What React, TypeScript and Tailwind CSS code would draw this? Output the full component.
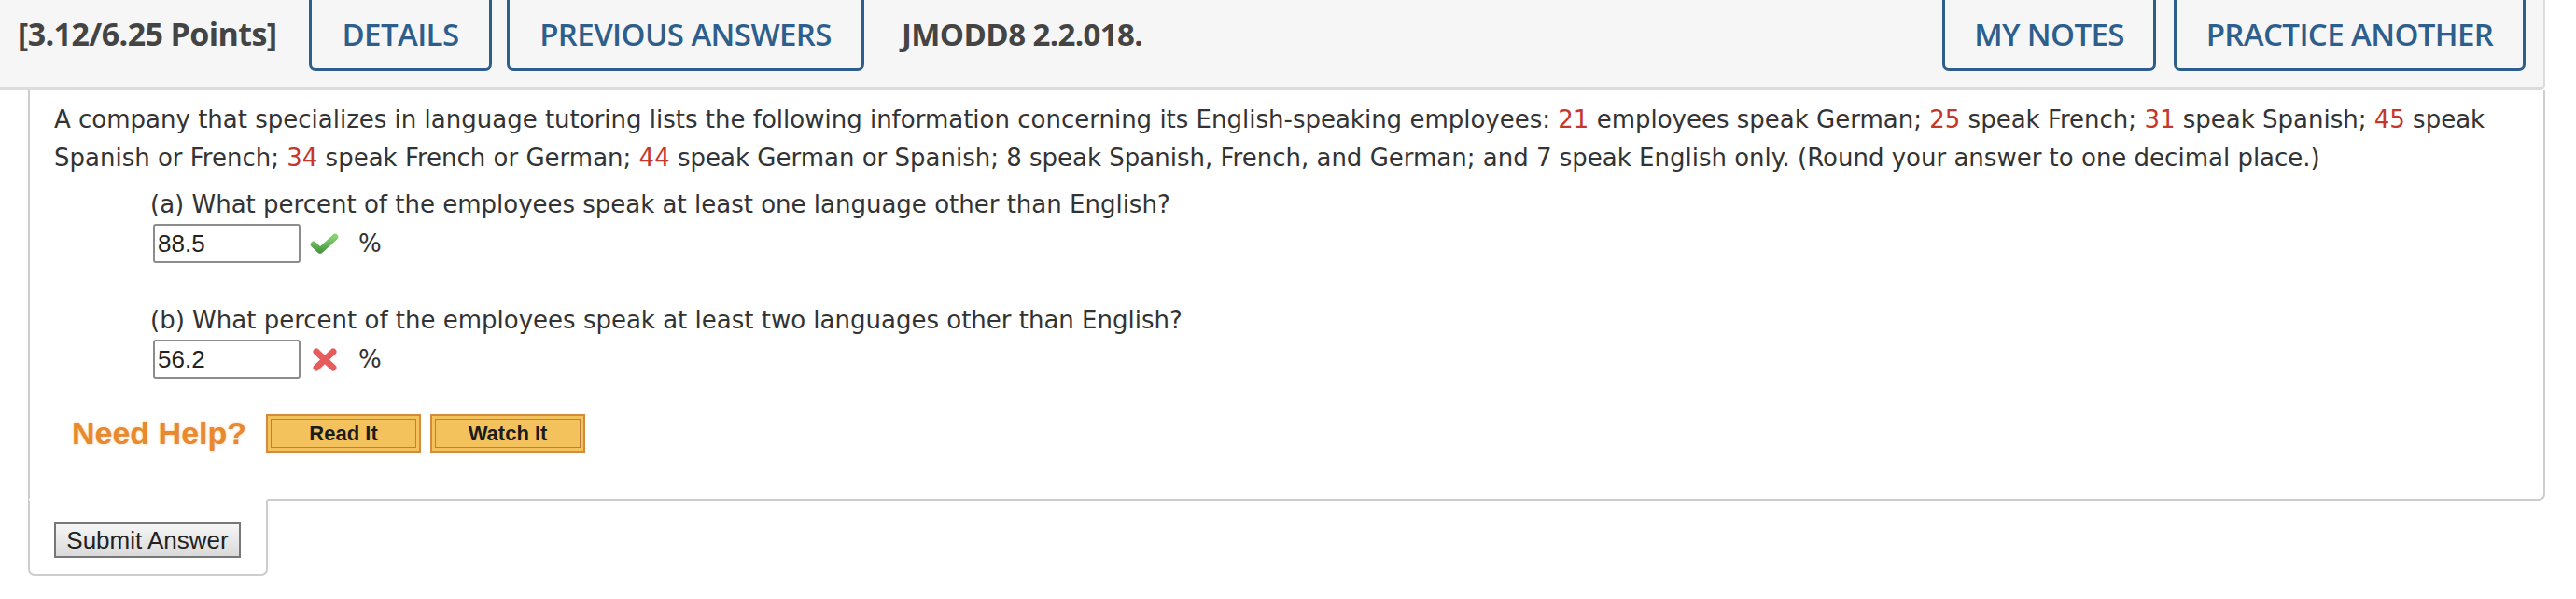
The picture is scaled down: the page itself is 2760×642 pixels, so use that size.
import React from 'react';

// Numbers shown in red inside the question text
const Num = ({ children }: { children: React.ReactNode }) => (
  <span className="text-[#c4372c]">{children}</span>
);

const HeaderButton = ({ label, width }: { label: string; width: string }) => (
  <button
    className={`${width} h-[76px] flex items-center justify-center border-[3px] border-t-0 border-[#2e5f8c] rounded-b-[7px] text-[#2e5f8c] font-semibold tracking-[-0.6px]`}
  >
    {label}
  </button>
);

const CheckIcon = () => (
  <svg width="31" height="22" viewBox="0 0 31 22" className="shrink-0">
    <defs>
      <linearGradient id="chk" x1="0" y1="0" x2="0" y2="1">
        <stop offset="0" stopColor="#86d272" />
        <stop offset="1" stopColor="#4c9a43" />
      </linearGradient>
    </defs>
    <path
      d="M4 12 L11 18.5 L27 4"
      fill="none"
      stroke="url(#chk)"
      strokeWidth="6.5"
      strokeLinecap="round"
      strokeLinejoin="round"
    />
  </svg>
);

const CrossIcon = () => (
  <svg width="28" height="25" viewBox="0 0 28 25" className="shrink-0">
    <path
      d="M5 4 L23 21 M23 4 L5 21"
      fill="none"
      stroke="#e65b5c"
      strokeWidth="7"
      strokeLinecap="round"
    />
  </svg>
);

const AnswerRow = ({ value, correct }: { value: string; correct: boolean }) => (
  <div className="flex items-center h-[42px] ml-[106px]">
    <input
      readOnly
      value={value}
      className="w-[158px] h-[42px] border-2 border-[#8c8c8c] rounded-[3px] px-[3px] bg-white text-[26px] text-[#222] font-['Liberation_Sans',Arial,sans-serif] outline-none"
    />
    <span className="ml-[10px] w-[31px] flex justify-center">
      {correct ? <CheckIcon /> : <CrossIcon />}
    </span>
    <span className="ml-[21px]">%</span>
  </div>
);

const HelpButton = ({ label }: { label: string }) => (
  <button className="w-[166px] h-[41px] p-[3px] bg-[#f4c25c] border-2 border-[#d58a3c]">
    <span className="w-full h-full flex items-center justify-center border border-[#b9803f] text-[22px] font-bold text-[#1c1c1c] font-['Liberation_Sans',Arial,sans-serif]">
      {label}
    </span>
  </button>
);

export default function App() {
  return (
    <div className="w-[2760px] h-[642px] overflow-hidden bg-white text-[#333] font-['DejaVu_Sans',Verdana,sans-serif]">
      {/* Top bar */}
      <header className="w-[2727px] h-[96px] bg-[#f6f6f6] border-b-[3px] border-r-2 border-[#dcdcdc] rounded-br-[5px] flex items-start font-['Open_Sans',sans-serif] text-[33px]">
        <div className="w-[314px] h-[73px] pl-[19px] flex items-center font-bold text-[34px] text-[#444] tracking-[-0.6px] whitespace-nowrap">
          [3.12/6.25 Points]
        </div>
        <div className="ml-[17px] flex gap-[16px]">
          <HeaderButton label="DETAILS" width="w-[196px]" />
          <HeaderButton label="PREVIOUS ANSWERS" width="w-[383px]" />
        </div>
        <div className="h-[73px] ml-[40px] flex items-center font-bold text-[#444] tracking-[-0.6px]">
          JMODD8 2.2.018.
        </div>
        <div className="ml-auto mr-[19px] flex gap-[19px]">
          <HeaderButton label="MY NOTES" width="w-[229px]" />
          <HeaderButton label="PRACTICE ANOTHER" width="w-[377px]" />
        </div>
      </header>

      {/* Question box */}
      <div className="ml-[30px] w-[2697px]">
        <div className="border-l-2 border-r-2 border-b-2 border-[#cdcdcd] rounded-br-[7px] pl-[26px] pr-[8px] pt-[12px] pb-[50px] text-[26px] leading-[41px]">
          <p>
            A company that specializes in language tutoring lists the following information concerning its
            English-speaking employees: <Num>21</Num> employees speak German; <Num>25</Num> speak French;{' '}
            <Num>31</Num> speak Spanish; <Num>45</Num> speak Spanish or French; <Num>34</Num> speak French or
            German; <Num>44</Num> speak German or Spanish; 8 speak Spanish, French, and German; and 7 speak English
            only. (Round your answer to one decimal place.)
          </p>

          <div className="mt-[9px] ml-[103px]">(a) What percent of the employees speak at least one language other than English?</div>
          <AnswerRow value="88.5" correct />

          <div className="mt-[41px] ml-[103px]">(b) What percent of the employees speak at least two languages other than English?</div>
          <AnswerRow value="56.2" correct={false} />

          <div className="mt-[38px] ml-[19px] flex items-center gap-[21px]">
            <span className="text-[34px] leading-[41px] font-bold text-[#e8892f] font-['Liberation_Sans',Arial,sans-serif] [text-shadow:0_0_3px_#f6cf9f]">
              Need Help?
            </span>
            <div className="flex gap-[10px]">
              <HelpButton label="Read It" />
              <HelpButton label="Watch It" />
            </div>
          </div>
        </div>

        {/* Submit tab */}
        <div className="relative -mt-[2px] w-[257px] h-[82px] bg-white border-2 border-[#cdcdcd] border-t-white rounded-b-[7px] pl-[26px] pt-[23px]">
          <button className="w-[200px] h-[38px] border-2 border-[#777] bg-gradient-to-b from-[#f6f6f6] to-[#dadada] text-[26px] leading-none text-[#222] font-['Liberation_Sans',Arial,sans-serif]">
            Submit Answer
          </button>
        </div>
      </div>
    </div>
  );
}
